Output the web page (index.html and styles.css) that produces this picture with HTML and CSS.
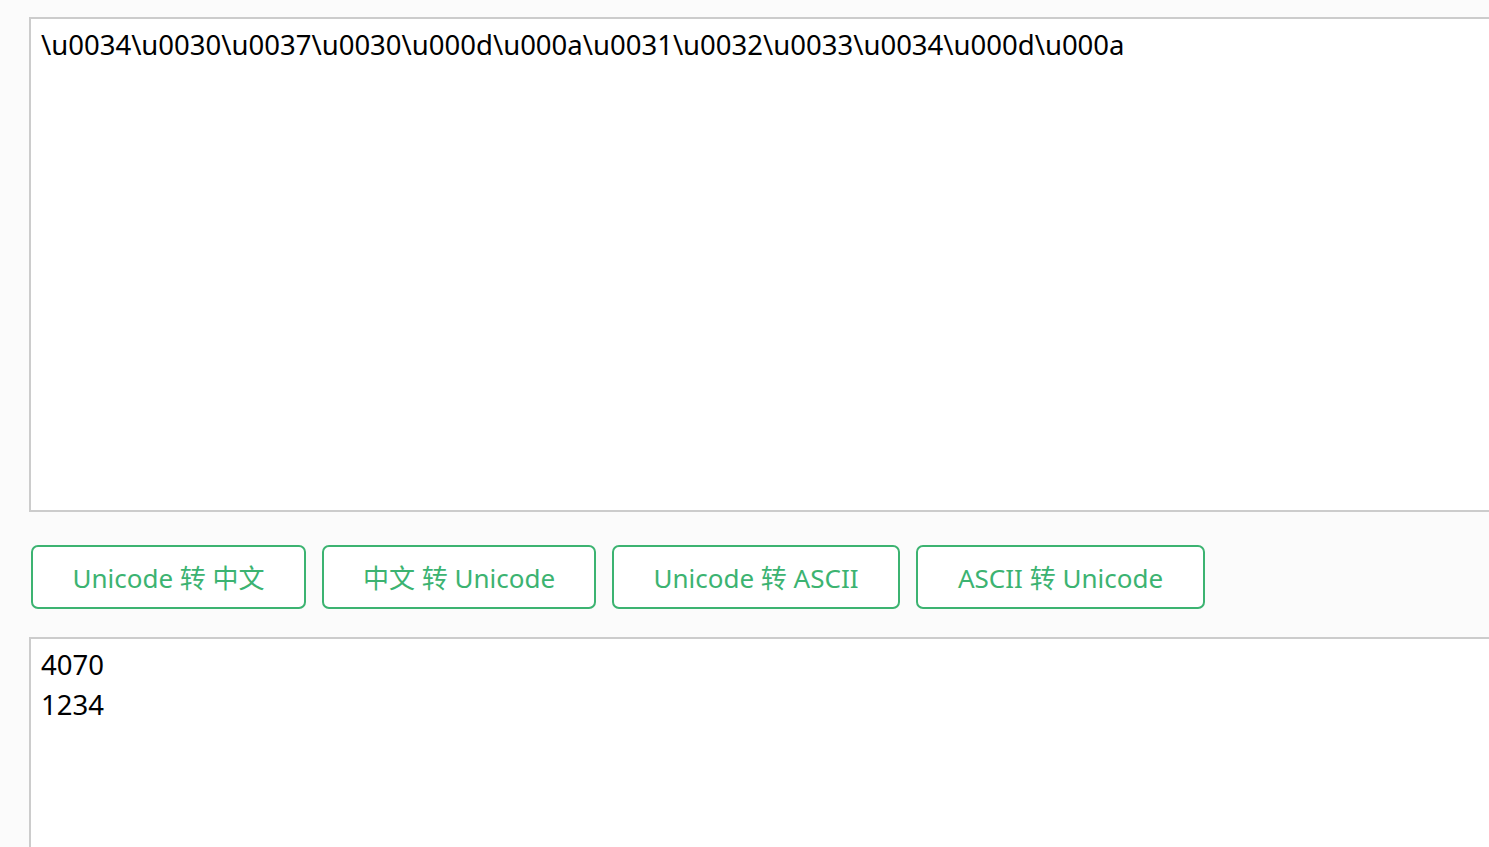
FILE: index.html
```html
<!DOCTYPE html>
<html lang="zh-CN">
<head>
<meta charset="utf-8">
<title>Unicode 转换</title>
<link rel="stylesheet" href="styles.css">
</head>
<body>
<main class="page">
<textarea class="box box-input">\u0034\u0030\u0037\u0030\u000d\u000a\u0031\u0032\u0033\u0034\u000d\u000a</textarea>
<div class="actions">
<button class="btn btn-1">Unicode 转 中文</button>
<button class="btn btn-2">中文 转 Unicode</button>
<button class="btn btn-3">Unicode 转 ASCII</button>
<button class="btn btn-4">ASCII 转 Unicode</button>
</div>
<textarea class="box box-output">4070
1234</textarea>
</main>
</body>
</html>
```

FILE: styles.css
```css
html, body {
  margin: 0;
  padding: 0;
  background: #fbfbfb;
  overflow: hidden;
  height: 847px;
}
.page {
  box-sizing: border-box;
  height: 847px;
  overflow: hidden;
  padding: 17px 0 0 29px;
  display: flex;
  flex-direction: column;
  font-family: "Noto Sans", "Noto Sans CJK SC", sans-serif;
}
.box {
  box-sizing: border-box;
  flex-shrink: 0;
  width: 1500px;
  margin: 0;
  border: 2px solid #cccccc;
  background: #ffffff;
  color: #000000;
  font-family: "Noto Sans", "Noto Sans CJK SC", sans-serif;
  font-size: 27.5px;
  line-height: 40px;
  padding: 6px 10px;
  resize: none;
  outline: none;
  overflow: hidden;
}
.box-input {
  height: 495px;
}
.box-output {
  height: 240px;
}
.actions {
  display: flex;
  flex-shrink: 0;
  gap: 16px;
  padding: 33px 0 28px 2px;
}
.btn {
  box-sizing: border-box;
  height: 64px;
  border: 2px solid #3cb371;
  border-radius: 7px;
  background: #ffffff;
  color: #3cb371;
  font-family: "Noto Sans", "Noto Sans CJK SC", sans-serif;
  font-size: 26px;
  padding: 0;
  cursor: pointer;
}
.btn-1 { width: 275px; }
.btn-2 { width: 274px; }
.btn-3 { width: 288px; }
.btn-4 { width: 289px; }
```
